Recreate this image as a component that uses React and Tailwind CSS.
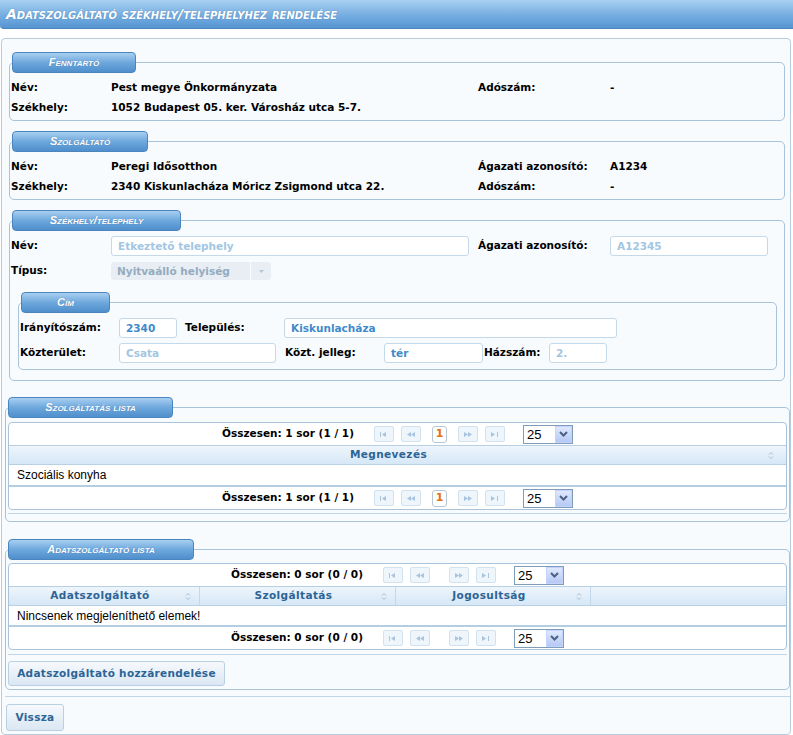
import React from "react";

const LEG =
  "ml-[2px] h-[21px] rounded-[4px] border border-[#4a86bd] bg-gradient-to-b from-[#a8cff0] via-[#6ea8dd] to-[#4f8fcc] text-white italic font-bold text-[11px] leading-[19px] [font-variant:small-caps] font-['Liberation_Sans',sans-serif] [text-shadow:0_0_1px_rgba(40,80,130,0.5)]";
const FS = "border border-[#a9c4da] rounded-[5px]";
const LBL = "text-[10.5px] font-bold text-black whitespace-nowrap";
const INP =
  "h-[20px] border border-[#c4d9ea] rounded-[3px] bg-white pl-[6px] text-[10.5px] font-bold leading-[18px] whitespace-nowrap overflow-hidden";

function Legend({ w, children }) {
  return (
    <legend className={LEG} style={{ width: w }}>
      <span className="block w-full text-center">{children}</span>
    </legend>
  );
}

function InfoRow({ l1, v1, l2, v2 }) {
  return (
    <div className="grid grid-cols-[100px_367px_132px_1fr] h-[20px] items-center pl-[1px]">
      <span className={LBL}>{l1}</span>
      <span className={LBL}>{v1}</span>
      <span className={LBL}>{l2}</span>
      <span className={LBL}>{v2}</span>
    </div>
  );
}

function Input({ w, value, active }) {
  return (
    <div
      className={`${INP} ${active ? "text-[#3f8acb]" : "text-[#a3c6e2]"}`}
      style={{ width: w }}
    >
      {value}
    </div>
  );
}

function FirstIcon() {
  return (
    <svg width="7" height="5" viewBox="0 0 7 5">
      <rect x="0" y="0" width="1" height="5" fill="#a9c4dc" />
      <polygon points="6,0 2,2.5 6,5" fill="#a9c4dc" />
    </svg>
  );
}
function PrevIcon() {
  return (
    <svg width="8" height="5" viewBox="0 0 8 5">
      <polygon points="4,0 0,2.5 4,5" fill="#a9c4dc" />
      <polygon points="8,0 4,2.5 8,5" fill="#a9c4dc" />
    </svg>
  );
}
function NextIcon() {
  return (
    <svg width="8" height="5" viewBox="0 0 8 5">
      <polygon points="0,0 4,2.5 0,5" fill="#a9c4dc" />
      <polygon points="4,0 8,2.5 4,5" fill="#a9c4dc" />
    </svg>
  );
}
function LastIcon() {
  return (
    <svg width="7" height="5" viewBox="0 0 7 5">
      <polygon points="0,0 4,2.5 0,5" fill="#a9c4dc" />
      <rect x="6" y="0" width="1" height="5" fill="#a9c4dc" />
    </svg>
  );
}

function PBtn({ children, className = "" }) {
  return (
    <div
      className={`w-[20px] h-[16px] rounded-[2px] border border-[#d3e2ef] bg-[#eef5fb] flex items-center justify-center ${className}`}
    >
      {children}
    </div>
  );
}

function Select25({ className = "" }) {
  return (
    <div
      className={`w-[50px] h-[19px] border border-[#7f9db9] bg-white flex items-center justify-between ${className}`}
    >
      <span className="pl-[3px] text-[13px] leading-none text-black font-['Liberation_Sans',sans-serif]">
        25
      </span>
      <div className="w-[17px] h-[17px] border border-[#c3d3fd] bg-gradient-to-b from-[#dfe8fd] to-[#b6c9f4] flex items-center justify-center">
        <svg width="9" height="6" viewBox="0 0 9 6">
          <polyline
            points="1,1 4.5,4.5 8,1"
            fill="none"
            stroke="#4d6185"
            strokeWidth="2"
          />
        </svg>
      </div>
    </div>
  );
}

function Paginator({ text, page }) {
  return (
    <div className="h-[22px] flex items-center justify-center">
      <span className="text-[10.5px] font-bold text-black">{text}</span>
      <PBtn className="ml-[20px]">
        <FirstIcon />
      </PBtn>
      <PBtn className="ml-[7px]">
        <PrevIcon />
      </PBtn>
      {page ? (
        <div className="ml-[11px] w-[15px] h-[17px] rounded-[3px] border border-[#b7c7d4] bg-white flex items-center justify-center text-[11px] font-bold text-[#e2730e]">
          1
        </div>
      ) : (
        <div className="w-[19px]" />
      )}
      <PBtn className={page ? "ml-[11px]" : ""}>
        <NextIcon />
      </PBtn>
      <PBtn className="ml-[7px]">
        <LastIcon />
      </PBtn>
      <Select25 className="ml-[18px]" />
    </div>
  );
}

function SortIcon() {
  return (
    <svg width="6" height="9" viewBox="0 0 6 9">
      <polyline points="1,3.5 3,1.5 5,3.5" fill="none" stroke="#a6bfd3" strokeWidth="1" />
      <polyline points="1,5.5 3,7.5 5,5.5" fill="none" stroke="#a6bfd3" strokeWidth="1" />
    </svg>
  );
}

const HDR =
  "h-[20px] border-y border-[#b7d0e4] bg-gradient-to-b from-[#eef5fc] to-[#d6e7f6] flex items-center";
const HTXT = "text-[10.5px] font-bold text-[#2c6496] tracking-[0.4px]";

function Button({ children, className = "" }) {
  return (
    <div
      className={`flex items-center justify-center rounded-[3px] border border-[#b9d0e3] bg-gradient-to-b from-[#f6f9fc] to-[#dae7f3] text-[10.5px] font-bold text-[#2c6496] tracking-[0.3px] ${className}`}
    >
      {children}
    </div>
  );
}

export default function App() {
  return (
    <div className="w-[793px] h-[735px] bg-white font-['DejaVu_Sans',sans-serif] overflow-hidden">
      {/* Title bar */}
      <div className="h-[29px] rounded-bl-[4px] border-b border-[#4b86bd] bg-gradient-to-b from-[#a9d0f1] via-[#79b0e2] to-[#5595d2] flex items-center pl-[6px]">
        <span className="text-white italic font-bold text-[14px] [font-variant:small-caps] [text-shadow:0_0_1px_rgba(40,80,130,0.6)]">
          Adatszolgáltató székhely/telephelyhez rendelése
        </span>
      </div>

      {/* Main container */}
      <div className="mt-[9px] ml-[1px] w-[790px] h-[697px] border border-[#b7cddd] rounded-[4px] bg-[#f8fbfd] pl-[3px]">
        {/* info panel */}
        <div className="pt-[13px] pl-[4px] pr-[5px] flex flex-col">
          <fieldset className={`${FS} pb-[2px]`}>
            <Legend w={124}>Fenntartó</Legend>
            <div className="pt-[5px]">
              <InfoRow l1="Név:" v1="Pest megye Önkormányzata" l2="Adószám:" v2="-" />
              <InfoRow l1="Székhely:" v1="1052 Budapest 05. ker. Városház utca 5-7." l2="" v2="" />
            </div>
          </fieldset>

          <fieldset className={`${FS} mt-[10px] pb-[2px]`}>
            <Legend w={136}>Szolgáltató</Legend>
            <div className="pt-[5px]">
              <InfoRow l1="Név:" v1="Peregi Idősotthon" l2="Ágazati azonosító:" v2="A1234" />
              <InfoRow
                l1="Székhely:"
                v1="2340 Kiskunlacháza Móricz Zsigmond utca 22."
                l2="Adószám:"
                v2="-"
              />
            </div>
          </fieldset>

          <fieldset className={`${FS} mt-[10px] pb-[10px]`}>
            <Legend w={169}>Székhely/telephely</Legend>
            <div className="pt-[5px] pl-[1px] flex items-center">
              <span className={`${LBL} w-[100px]`}>Név:</span>
              <Input w={358} value="Etkeztető telephely" />
              <span className={`${LBL} ml-[9px] w-[132px]`}>Ágazati azonosító:</span>
              <Input w={158} value="A12345" />
            </div>
            <div className="mt-[6px] pl-[1px] flex items-center">
              <span className={`${LBL} w-[100px]`}>Típus:</span>
              <div className="flex h-[18px]">
                <div className="w-[139px] h-[18px] rounded-l-[3px] bg-[#e8eef3] pl-[6px] text-[10.5px] font-bold leading-[18px] text-[#94abc0] whitespace-nowrap overflow-hidden">
                  Nyitvaálló helyiség
                </div>
                <div className="ml-[1px] w-[20px] h-[18px] rounded-r-[3px] bg-[#e8eef3] flex items-center justify-center">
                  <svg width="5" height="3" viewBox="0 0 5 3">
                    <polygon points="0,0 5,0 2.5,3" fill="#b4c5d4" />
                  </svg>
                </div>
              </div>
            </div>

            <fieldset className={`${FS} mt-[12px] ml-[8px] mr-[7px] pb-[6px]`}>
              <Legend w={89}>Cím</Legend>
              <div className="pt-[5px] pl-[1px] flex items-center">
                <span className={`${LBL} w-[99px]`}>Irányítószám:</span>
                <Input w={58} value="2340" active />
                <span className={`${LBL} ml-[8px] w-[99px]`}>Település:</span>
                <Input w={333} value="Kiskunlacháza" active />
              </div>
              <div className="mt-[5px] pl-[1px] flex items-center">
                <span className={`${LBL} w-[99px]`}>Közterület:</span>
                <Input w={157} value="Csata" />
                <span className={`${LBL} ml-[9px] w-[99px]`}>Közt. jelleg:</span>
                <Input w={99} value="tér" active />
                <span className={`${LBL} ml-[1px] w-[65px]`}>Házszám:</span>
                <Input w={58} value="2." />
              </div>
            </fieldset>
          </fieldset>
        </div>

        {/* Szolgáltatás lista */}
        <fieldset className={`${FS} mt-[16px] pb-[7px]`}>
          <Legend w={165}>Szolgáltatás lista</Legend>
          <div className="mt-[4px] mx-[2px] border border-[#a9c4da] rounded-[4px] bg-white overflow-hidden">
            <Paginator text="Összesen: 1 sor (1 / 1)" page />
            <div className={HDR}>
              <span className={`${HTXT} flex-1 text-center`}>Megnevezés</span>
              <span className="mr-[12px] flex">
                <SortIcon />
              </span>
            </div>
            <div className="h-[22px] flex items-center pl-[8px] text-[12px] text-black font-['Liberation_Sans',sans-serif] border-b-2 border-[#b3cde2]">
              Szociális konyha
            </div>
            <Paginator text="Összesen: 1 sor (1 / 1)" page />
          </div>
          <div className="mt-[3px] mx-[2px] border-t border-[#c3d6e5]" />
        </fieldset>

        {/* Adatszolgáltató lista */}
        <fieldset className={`${FS} mt-[17px] pb-[3px]`}>
          <Legend w={186}>Adatszolgáltató lista</Legend>
          <div className="mt-[3px] mx-[2px] border border-[#a9c4da] rounded-[4px] bg-white overflow-hidden">
            <Paginator text="Összesen: 0 sor (0 / 0)" />
            <div className={HDR}>
              <div className="w-[191px] h-full flex items-center border-r border-[#c3d8ea]">
                <span className={`${HTXT} flex-1 text-center pl-[6px]`}>Adatszolgáltató</span>
                <span className="mr-[8px] flex">
                  <SortIcon />
                </span>
              </div>
              <div className="w-[196px] h-full flex items-center border-r border-[#c3d8ea]">
                <span className={`${HTXT} flex-1 text-center pl-[6px]`}>Szolgáltatás</span>
                <span className="mr-[8px] flex">
                  <SortIcon />
                </span>
              </div>
              <div className="w-[195px] h-full flex items-center border-r border-[#c3d8ea]">
                <span className={`${HTXT} flex-1 text-center pl-[6px]`}>Jogosultság</span>
                <span className="mr-[8px] flex">
                  <SortIcon />
                </span>
              </div>
              <div className="flex-1" />
            </div>
            <div className="h-[21px] flex items-center pl-[8px] text-[12px] text-black font-['Liberation_Sans',sans-serif] border-b-2 border-[#b3cde2]">
              Nincsenek megjeleníthető elemek!
            </div>
            <Paginator text="Összesen: 0 sor (0 / 0)" />
          </div>
          <div className="mt-[4px] mx-[2px] border-t border-[#c3d6e5]" />
          <Button className="mt-[6px] ml-[2px] h-[25px] w-[217px]">
            Adatszolgáltató hozzárendelése
          </Button>
        </fieldset>

        <div className="mt-[6px] border-t border-[#c3d6e5]" />
        <Button className="mt-[7px] ml-[1px] h-[27px] w-[58px]">Vissza</Button>
      </div>
    </div>
  );
}
